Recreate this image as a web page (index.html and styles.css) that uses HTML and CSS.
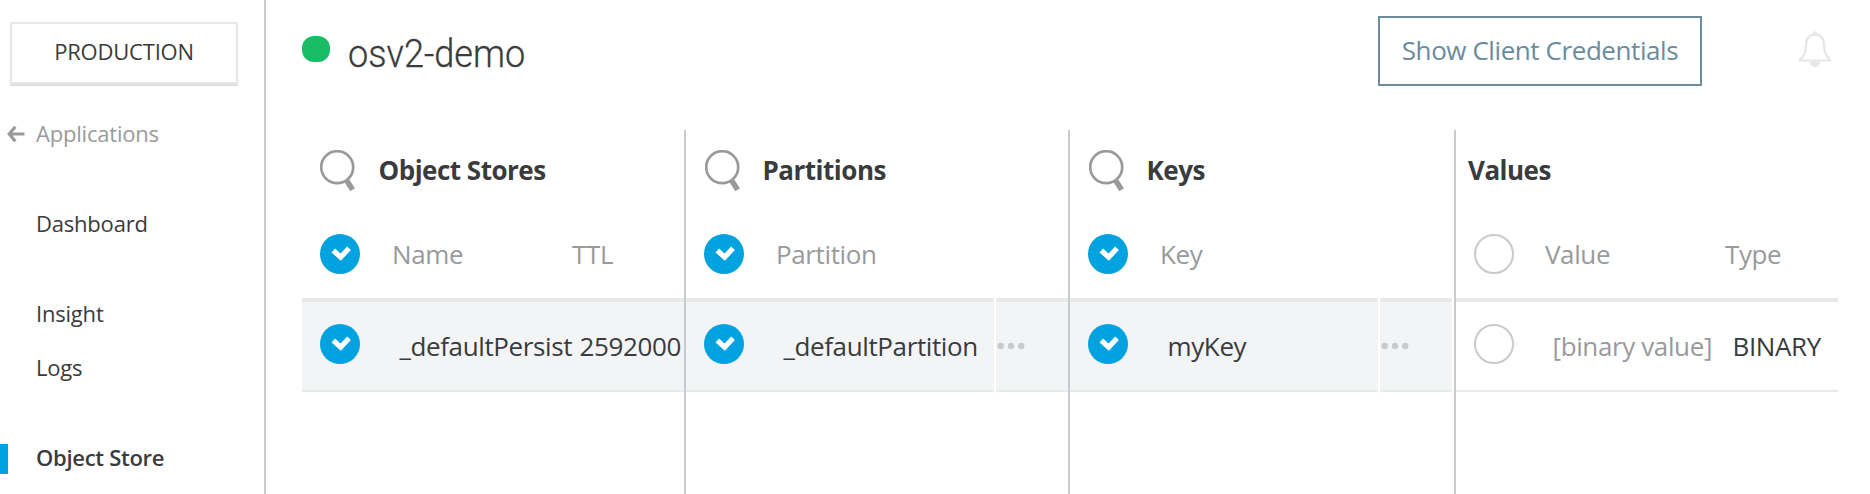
FILE: index.html
```html
<!DOCTYPE html>
<html lang="en">
<head>
<meta charset="utf-8">
<title>osv2-demo</title>
<link rel="stylesheet" href="styles.css">
</head>
<body>
<svg class="defs" width="0" height="0">
  <symbol id="search" viewBox="0 0 36 43"><circle cx="17.2" cy="17.2" r="16" fill="none" stroke="#999a9b" stroke-width="2.7"/><path d="M27 31 32.600 39.700" stroke="#999a9b" stroke-width="5.400"/></symbol>
  <symbol id="check" viewBox="0 0 40 40"><circle cx="20" cy="20" r="20" fill="#00a2df"/><path d="M13.300 16.500l7.400 6.700 8.300-8.900" fill="none" stroke="#fff" stroke-width="5.200"/></symbol>
  <symbol id="dots" viewBox="0 0 28 8"><g fill="#c9cacb"><circle cx="3.7" cy="4" r="3.2"/><circle cx="14" cy="4" r="3.2"/><circle cx="24.2" cy="4" r="3.2"/></g></symbol>
</svg>
<div class="app">
  <aside class="sidebar">
    <div class="env">PRODUCTION</div>
    <a class="back"><svg class="arrow" viewBox="0 0 18 16"><path d="M17.500 8H3M8.300 .8 2.200 8 8.300 15.200" fill="none" stroke="#999a9b" stroke-width="3.200"/></svg><span>Applications</span></a>
    <nav class="nav">
      <a class="item dashboard">Dashboard</a>
      <a class="item">Insight</a>
      <a class="item logs">Logs</a>
      <a class="item active">Object Store</a>
    </nav>
  </aside>
  <main class="main">
    <header class="header">
      <span class="status"></span>
      <h1 class="title">osv2-demo</h1>
      <button class="credentials">Show Client Credentials</button>
      <svg class="bell" viewBox="0 0 34 37"><path d="M17 3.500C11 3.500 8.300 8 8 14 7.700 22 6 25 1.600 29.600H32.400C28 25 26.300 22 26 14 25.700 8 23 3.500 17 3.500Z" fill="none" stroke="#e6e8e8" stroke-width="2.400" stroke-linejoin="round"/><circle cx="17" cy="2.400" r="2.200" fill="#e6e8e8"/><path d="M12 30.500a5 5.500 0 0 0 10 0Z" fill="#e6e8e8"/></svg>
    </header>
    <section class="columns">
      <div class="column stores">
        <div class="heading"><svg class="search"><use href="#search"/></svg><h2>Object Stores</h2></div>
        <div class="labels"><svg class="check"><use href="#check"/></svg><span class="first">Name</span><span class="second">TTL</span></div>
        <div class="row selected"><div class="cell"><svg class="check"><use href="#check"/></svg><span class="first">_defaultPersist</span><span class="second">2592000</span></div></div>
      </div>
      <div class="column partitions">
        <div class="heading"><svg class="search"><use href="#search"/></svg><h2>Partitions</h2></div>
        <div class="labels"><svg class="check"><use href="#check"/></svg><span class="first">Partition</span></div>
        <div class="row selected"><div class="cell"><svg class="check"><use href="#check"/></svg><span class="first">_defaultPartition</span></div><div class="more"><svg class="dots"><use href="#dots"/></svg></div></div>
      </div>
      <div class="column keys">
        <div class="heading"><svg class="search"><use href="#search"/></svg><h2>Keys</h2></div>
        <div class="labels"><svg class="check"><use href="#check"/></svg><span class="first">Key</span></div>
        <div class="row selected"><div class="cell"><svg class="check"><use href="#check"/></svg><span class="first">myKey</span></div><div class="more"><svg class="dots"><use href="#dots"/></svg></div></div>
      </div>
      <div class="column values">
        <div class="heading"><h2>Values</h2></div>
        <div class="labels"><span class="radio"></span><span class="first">Value</span><span class="second">Type</span></div>
        <div class="row"><div class="cell"><span class="radio"></span><span class="first muted">[binary value]</span><span class="second">BINARY</span></div></div>
      </div>
    </section>
  </main>
</div>
</body>
</html>
```
FILE: styles.css
```css
* { box-sizing: border-box; }
body { margin: 0; background: #fff; color: #3a3b3c; font-family: "Open Sans", sans-serif; font-size: 26px; letter-spacing: -0.38px; }
.defs { display: block; height: 0; }
.app { display: flex; height: 494px; overflow: hidden; }
.sidebar { width: 266px; flex: none; border-right: 2px solid #c9cacb; font-size: 22px; letter-spacing: -0.2px; padding-top: 22px; }
.env { width: 228px; height: 62px; margin-left: 10px; border: 2px solid #e6e7e7; box-shadow: 0 2px 1px #dfe0e0; text-align: center; line-height: 54px; }
.back { display: flex; align-items: center; height: 30px; margin-top: 34px; padding-left: 7px; color: #999a9b; line-height: 30px; }
.arrow { width: 18px; height: 16px; margin: 2px 11px 0 0; flex: none; }
.nav { display: flex; flex-direction: column; margin-top: 60px; }
.item { height: 30px; line-height: 30px; padding-left: 36px; margin-bottom: 24px; }
.dashboard { margin-bottom: 60px; }
.logs { margin-bottom: 62px; }
.active { font-weight: 600; border-left: 8px solid #00a2df; padding-left: 28px; line-height: 26px; letter-spacing: -0.28px; }
.main { flex: 1; min-width: 0; padding-left: 36px; }
.header { display: flex; height: 130px; align-items: flex-start; }
.status { width: 28px; height: 26px; margin-top: 36px; border-radius: 12px; background: #1abc66; }
.title { margin: 31px 0 0 18px; font: 300 38px/46px Roboto, sans-serif; letter-spacing: 0; transform: scaleX(0.95); transform-origin: left; -webkit-text-stroke: 0.3px; }
.credentials { width: 324px; height: 70px; margin: 16px 96px 0 auto; padding: 0 0 2px; border: 2px solid #6a8c9c; background: none; color: #6a8c9c; font: inherit; letter-spacing: -0.42px; line-height: 62px; }
.bell { width: 34px; height: 37px; margin: 31px 38px 0 0; flex: none; }
.columns { display: flex; height: 364px; }
.column { border-right: 2px solid #c9cacb; flex: none; }
.stores { width: 384px; }
.partitions { width: 384px; }
.keys { width: 386px; padding-right: 2px; }
.values { width: 382px; border-right: 0; }
.heading { display: flex; height: 88px; padding: 20px 0 0 18px; }
.search { width: 36px; height: 43px; margin: 0 21.5px 0 1px; flex: none; }
.heading h2 { margin: 2px 0 0; font-size: 26px; font-weight: 700; line-height: 36px; letter-spacing: -0.5px; }
.stores .search { margin: 0 23px 0 -0.5px; }
.values .heading { padding-left: 12px; }
.labels { display: flex; height: 80px; padding: 16px 0 0 18px; color: #999a9b; line-height: 40px; }
.check, .radio { width: 40px; height: 40px; flex: none; }
.radio { border: 2px solid #c9cacb; border-radius: 50%; }
.labels .first { width: 148px; margin-left: 32px; white-space: nowrap; }
.labels .second { margin-left: 32px; }
.values .labels .first { margin-left: 31px; }
.row { display: flex; height: 94px; }
.cell { display: flex; flex: 1; min-width: 0; padding: 22px 0 0 18px; border-top: 4px solid #e8e9e9; border-bottom: 2px solid #e8e9e9; line-height: 44px; white-space: nowrap; }
.cell .first { width: 174px; margin-left: 39.5px; }
.cell .second { margin-left: 6px; }
.values .cell .first { margin-left: 38.5px; }
.selected .cell, .more { background: #f3f4f6; }
.more { width: 72px; margin-left: 2px; padding: 40px 0 0 1px; border-top: 4px solid #e8e9e9; border-bottom: 2px solid #e8e9e9; }
.dots { display: block; width: 28px; height: 8px; }
.muted { color: #999a9b; }
```
